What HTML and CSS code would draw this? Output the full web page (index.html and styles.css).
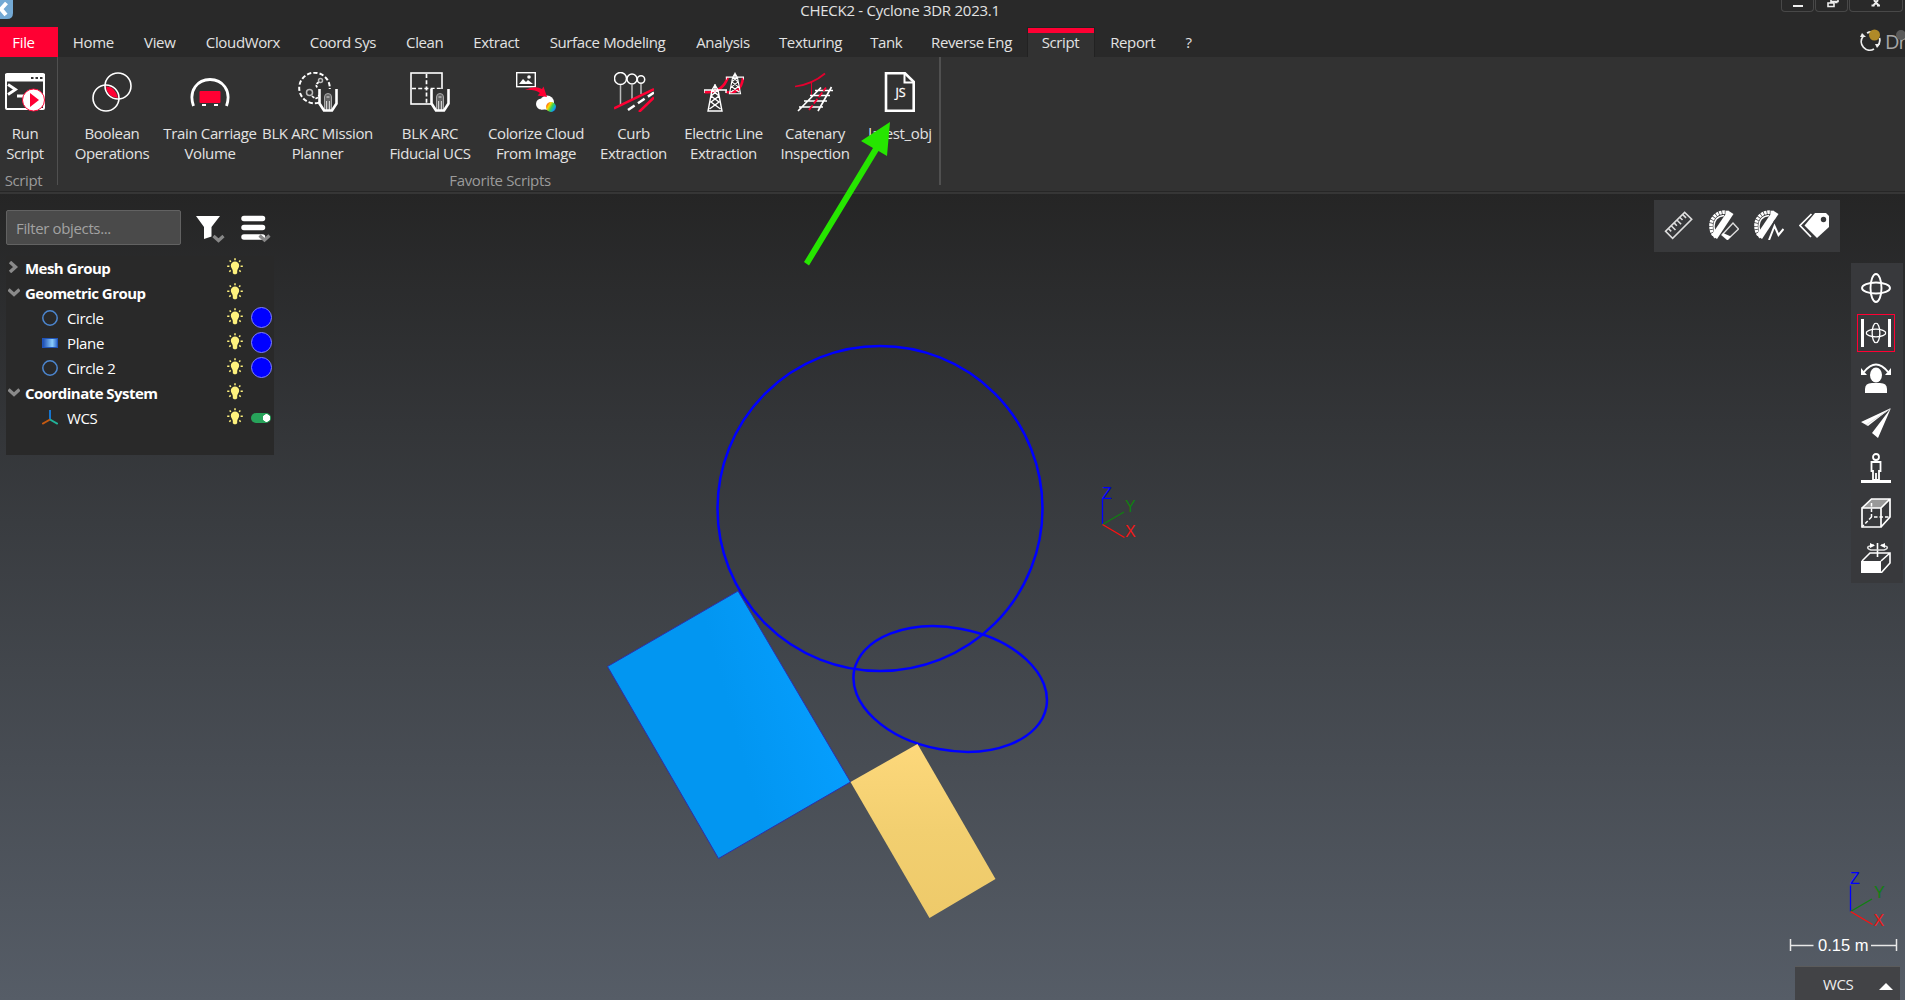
FILE: index.html
```html
<!DOCTYPE html>
<html lang="en">
<head>
<meta charset="utf-8">
<title>CHECK2 - Cyclone 3DR 2023.1</title>
<link rel="stylesheet" href="styles.css">
</head>
<body>
<svg class="defs" aria-hidden="true">
  <defs>
    <linearGradient id="blueFace" x1="0" y1="0.6" x2="1" y2="0.3"><stop offset="0.5" stop-color="#0296f1"/><stop offset="0.9" stop-color="#069efe"/></linearGradient>
    <linearGradient id="goldFace" x1="0" y1="0" x2="0" y2="1"><stop offset="0" stop-color="#fdd87b"/><stop offset="0.5" stop-color="#f2cf70"/><stop offset="1" stop-color="#eeca6a"/></linearGradient>
    <linearGradient id="planeFill"><stop offset="0" stop-color="#1646b0"/><stop offset="0.65" stop-color="#8bcdfb"/><stop offset="1" stop-color="#2a62c8"/></linearGradient>
    <linearGradient id="rainbow" x1="0" y1="0.2" x2="1" y2="0.8"><stop offset="0" stop-color="#ff3b1f"/><stop offset="0.3" stop-color="#ffd900"/><stop offset="0.55" stop-color="#39d353"/><stop offset="0.8" stop-color="#10a5e8"/><stop offset="1" stop-color="#2840d0"/></linearGradient>
    <symbol id="bulb" viewBox="0 0 16 18">
      <path d="M8 3.500a4.200 4.200 0 0 1 4.200 4.200c0 2-1.700 2.800-2 5.300v2.300L9 16.300H7l-1.200-1V13c-.3-2.500-2-3.300-2-5.300A4.200 4.200 0 0 1 8 3.500z" fill="#fff27d"/>
      <path d="M8 .3v2M2.600 2.500l1.300 1.300M13.400 2.500l-1.300 1.300M.2 8.200h2.200M13.600 8.200h2.200M2.300 13.700l1.400-1.300M13.700 13.700l-1.400-1.300" stroke="#fff27d" stroke-width="1.500"/>
    </symbol>
    <symbol id="ring" viewBox="0 0 16 16"><circle cx="8" cy="8" r="7.200" fill="none" stroke="#4c86cf" stroke-width="1.500"/></symbol>
    <symbol id="scanner" viewBox="0 0 20 24">
      <path d="M1 1v14l4.500 7.500h9L19 15V1" fill="#323232"/>
      <path d="M6.500 22V9q0-3.500 3.500-3.500T13.500 9v13" fill="#666" stroke="#aaa"/><path d="M8.600 13v9M11.400 13v9M8.500 9h3" stroke="#ddd"/>
      <path d="M1.500 1v14.500L6 22.500h8l4.500-7V1" fill="none" stroke="#fff" stroke-width="2.600"/>
    </symbol>
    <symbol id="pylon" viewBox="0 0 24 28">
      <path d="M0 6h24M1 6v3M23 6v3M12 0v6M9 6l3-5 3 5M9 6 5 27h14L15 6M8 12l8 6-9.500 7M16 12l-8 6 9.500 7M9 6l7 6M15 6l-7 6" fill="none" stroke="#fff" stroke-width="1.400"/>
    </symbol>
    <symbol id="orbit" viewBox="0 0 30 30"><g fill="none" stroke="#fff" stroke-width="1.900"><ellipse cx="15" cy="15" rx="14" ry="5.500"/><ellipse cx="15" cy="15" rx="5.500" ry="14"/></g></symbol>
    <symbol id="protractor" viewBox="0 0 30 30">
      <path d="M19 2.500C9 .5 2 7.500 2 15.500c0 6 2 9 5 11.500" fill="none" stroke="#fff" stroke-width="3.600" stroke-dasharray="2.500 .7"/>
      <path d="M15 5.500C8 6 5 11 5 16c0 3 1 6 3 8" fill="none" stroke="#fff" stroke-width="1.400"/>
      <path d="M19 .5l5.500 3.500L8 29l-5.500-4z" fill="#fff"/>
    </symbol>
  </defs>
</svg>

<div class="app">
  <header class="titlebar">
    <svg class="app-logo" width="13" height="19" viewBox="0 0 13 19"><path d="M0 0h13v13q0 6-6 6H0z" fill="#73a9d4"/><path d="M6.500 3 1 9l5 6" fill="none" stroke="#fff" stroke-width="4"/></svg>
    <div class="title">CHECK2 - Cyclone 3DR 2023.1</div>
    <div class="window-controls">
      <span><svg width="33" height="12"><path d="M11 6h10" stroke="#eee" stroke-width="2"/></svg></span>
      <span><svg width="33" height="12"><path d="M15 0v1.500h7V0M12 3h6v3.500h-6zM19 2.500h2.500" fill="none" stroke="#eee" stroke-width="1.600"/></svg></span>
      <span class="close"><svg width="54" height="12"><path d="M23 6l5-6M29 6l-5-6M21.500 5.500h3M27 5.500h3" stroke="#eee" stroke-width="2"/></svg></span>
    </div>
  </header>

  <nav class="tabs">
    <a class="file">File</a><a>Home</a><a>View</a><a>CloudWorx</a><a>Coord Sys</a><a>Clean</a><a>Extract</a><a>Surface Modeling</a><a>Analysis</a><a>Texturing</a><a>Tank</a><a>Reverse Eng</a><a class="active">Script</a><a>Report</a><a>?</a>
    <div class="account">
      <svg width="24" height="24" viewBox="0 0 24 24"><path d="M3 7.500A8.500 8.500 0 0 0 14 20M19.500 9a8.500 8.500 0 0 1-2.500 8.500M7 4q2-1 4-1" fill="none" stroke="#eee" stroke-width="1.800"/><path d="M0 8l2-4 4 4zM15 15h5l-3 4z" fill="#eee"/><circle cx="14.500" cy="6" r="5.500" fill="#b08a28"/></svg>
      <span>Dr</span>
      <i class="presence"></i>
    </div>
  </nav>

  <section class="ribbon">
    <div class="group run">
      <div class="tools">
        <div class="tool">
          <svg viewBox="0 0 40 40"><rect x="1" y="2" width="38" height="35" rx="1" fill="none" stroke="#fff" stroke-width="2"/><path d="M0 2h40v7.500H0z" fill="#fff"/><path d="M26 6h2.500M30.500 6H33M35 6h2.500" stroke="#323232" stroke-width="2"/><path d="M3 12.500l7.500 5L3 22.500M12 24h8" fill="none" stroke="#fff" stroke-width="2.800"/><circle cx="28.500" cy="28" r="11" fill="#fff" stroke="#ff0033"/><path d="M25 21l9 7-9 7z" fill="#ff0033"/></svg>
          <span>Run<br>Script</span>
        </div>
      </div>
      <div class="caption">Script</div>
    </div>
    <div class="group favorites">
      <div class="tools">
        <div class="tool">
          <svg viewBox="0 0 40 40"><g fill="none" stroke="#fff" stroke-width="1.600"><circle cx="14" cy="26" r="13"/><circle cx="26" cy="14" r="13"/></g><path d="M14 14.500q9-.5 12 11.500Q15 25 14 14.500z" fill="#ff0033"/></svg>
          <span>Boolean<br>Operations</span>
        </div>
        <div class="tool">
          <svg viewBox="0 0 40 40"><path d="M3.500 34C-2 18 8 7.500 20 7.500S42 18 36.500 34" fill="none" stroke="#fff" stroke-width="2.800"/><rect x="9.500" y="19" width="21" height="12" rx="1" fill="#ff0033"/><path d="M12 33h4M24 33h4" stroke="#fff" stroke-width="2"/></svg>
          <span>Train Carriage<br>Volume</span>
        </div>
        <div class="tool">
          <svg viewBox="0 0 40 40"><circle cx="16.500" cy="16" r="15.300" fill="none" stroke="#fff" stroke-width="2" stroke-dasharray="4.300 2.100"/><path d="M21 10q-5 3-1 6M14 24q5 5 7-1" fill="none" stroke="#fff" stroke-width="1.700" stroke-dasharray="3 1"/><g fill="none" stroke="#bbb" stroke-width="1.500"><circle cx="22.500" cy="8.500" r="2"/><circle cx="11.500" cy="20.500" r="3"/></g><use href="#scanner" x="20" y="16" width="20" height="24"/></svg>
          <span>BLK ARC Mission<br>Planner</span>
        </div>
        <div class="tool">
          <svg viewBox="0 0 40 40"><rect x="1" y="1" width="31" height="31" fill="none" stroke="#fff" stroke-width="1.600"/><path d="M2 16.500h30M16.500 2v30" stroke="#fff" stroke-width="1.700" stroke-dasharray="4 2.200"/><use href="#scanner" x="20" y="16" width="20" height="24"/></svg>
          <span>BLK ARC<br>Fiducial UCS</span>
        </div>
        <div class="tool">
          <svg viewBox="0 0 40 40"><rect x=".7" y=".7" width="18.600" height="14" fill="none" stroke="#fff" stroke-width="1.400"/><path d="M3 12l4-5 3 3 2-2 5 4z" fill="#fff"/><circle cx="13" cy="5" r="1.800" fill="#fff"/><circle cx="25.500" cy="32" r="5.500" fill="#fff"/><circle cx="31" cy="30.500" r="7" fill="#fff"/><path d="M24 33h10v4.500H25z" fill="#fff"/><path d="M9 18q10-5 17-1l1.500-2.500L31 25l-9.500-1.500L24 21q-6-4-15-3z" fill="#ff0033"/><circle cx="35" cy="35" r="5" fill="url(#rainbow)"/></svg>
          <span>Colorize Cloud<br>From Image</span>
        </div>
        <div class="tool">
          <svg viewBox="0 0 40 40"><g fill="none" stroke="#fff" stroke-width="1.500"><circle cx="6.500" cy="6.500" r="6"/><circle cx="18" cy="7" r="5"/><circle cx="27" cy="7.500" r="3.700"/><path d="M6.500 13v20M18 12v15M27 12v10" stroke="#bbb"/></g><path d="M0 36.500 40 17M25 40l15-14.500" stroke="#ff0033" stroke-width="2.500"/><path d="M14 38 40 20.500" stroke="#fff" stroke-width="2.500" stroke-dasharray="8 4"/></svg>
          <span>Curb<br>Extraction</span>
        </div>
        <div class="tool">
          <svg viewBox="0 0 40 40"><path d="M0 20q18 2 24-15M22 20q15 3 17-14" fill="none" stroke="#ff0033" stroke-width="2.500"/><use href="#pylon" x="21.500" y="0" width="19" height="23"/><use href="#pylon" x="-1" y="12" width="24" height="28"/></svg>
          <span>Electric Line<br>Extraction</span>
        </div>
        <div class="tool">
          <svg viewBox="0 0 40 40"><path d="M0 14.500q17-2 30-13" fill="none" stroke="#e4002e" stroke-width="1.700"/><path d="M16.500 10v16" stroke="#e4002e" stroke-width="1"/><path d="M3 39 26 15.500M23 39 36.500 15M20 18.500h18M15 23.500h20M9 29h23M4 35h24" stroke="#fff" stroke-width="1.700"/><path d="M14 38 31 15.500" stroke="#ff0033" stroke-width="1.800" stroke-dasharray="6 2"/></svg>
          <span>Catenary<br>Inspection</span>
        </div>
        <div class="tool">
          <svg viewBox="0 0 40 40"><path d="M6 1.300h19l8.700 8.500v29H6z" fill="none" stroke="#fff" stroke-width="2.600"/><path d="M24.500 1v9.500H34" fill="none" stroke="#fff" stroke-width="2"/><text class="js" x="20.500" y="24.500">JS</text></svg>
          <span>latest_obj</span>
        </div>
      </div>
      <div class="caption">Favorite Scripts</div>
    </div>
  </section>

  <main class="viewport">
    <aside class="explorer">
      <div class="filter-row">
        <div class="filter">Filter objects...</div>
        <svg class="funnel" width="30" height="30" viewBox="0 0 30 30"><path d="M0 2h24l-8.500 11v9.500L8 25V13z" fill="#fff"/><path d="M17.500 22l5 4.500 5-4.500" fill="none" stroke="#888" stroke-width="3.200"/></svg>
        <svg width="30" height="30" viewBox="0 0 30 30"><path d="M3 4.500h18.500M3 13.500h18.500M3 23h18.500" stroke="#fff" stroke-width="5.500" stroke-linecap="round"/><path d="M18.500 21.500l5 4.500 5-4.500" fill="none" stroke="#888" stroke-width="3.200"/></svg>
      </div>
      <div class="tree">
        <div class="row group-row"><svg class="chev" viewBox="0 0 12 12"><path d="M2 1l5.500 5L2 11" /></svg><b>Mesh Group</b><svg class="bulb"><use href="#bulb"/></svg></div>
        <div class="row group-row"><svg class="chev" viewBox="0 0 12 12"><path d="M.5 3.500 6 8.500l5.500-5"/></svg><b>Geometric Group</b><svg class="bulb"><use href="#bulb"/></svg></div>
        <div class="row"><svg class="kind"><use href="#ring"/></svg><span>Circle</span><svg class="bulb"><use href="#bulb"/></svg><i class="swatch"></i></div>
        <div class="row"><svg class="kind" viewBox="0 0 16 16"><rect x=".5" y="3.500" width="15" height="9" fill="url(#planeFill)" stroke="#2154b8"/></svg><span>Plane</span><svg class="bulb"><use href="#bulb"/></svg><i class="swatch"></i></div>
        <div class="row"><svg class="kind"><use href="#ring"/></svg><span>Circle 2</span><svg class="bulb"><use href="#bulb"/></svg><i class="swatch"></i></div>
        <div class="row group-row"><svg class="chev" viewBox="0 0 12 12"><path d="M.5 3.500 6 8.500l5.500-5"/></svg><b>Coordinate System</b><svg class="bulb"><use href="#bulb"/></svg></div>
        <div class="row"><svg class="kind" viewBox="0 0 16 16"><g stroke-width="1.900"><path d="M8 0v9.500" stroke="#1679d8"/><path d="M8 9.500.3 14" stroke="#c65a11"/><path d="M8 9.500l7.700 4.500" stroke="#22b39a"/></g></svg><span>WCS</span><svg class="bulb"><use href="#bulb"/></svg><i class="toggle"></i></div>
      </div>
    </aside>

    <svg class="scene" viewBox="0 195 1905 805">
      <polygon points="738,591 607.500,666.500 718.500,858.500 850.500,782" fill="url(#blueFace)" stroke="#2a2fae"/>
      <g fill="none" stroke="#0000ff" stroke-width="2.500"><circle cx="880" cy="508.500" r="162.500"/><ellipse cx="950.200" cy="689" rx="97.800" ry="61.100" transform="rotate(10.700 950.200 689)"/></g>
      <polygon points="917.500,744 995.500,879 929.500,918 850.500,782" fill="url(#goldFace)"/>
      <g class="axes" transform="translate(1102.500 524.500)"><path d="M0 0V-26" stroke="#0000ff"/><path d="M0 0l21.500-12.500" stroke="#108010"/><path d="M0 0l22 13" stroke="#ff1010"/><text x="-.5" y="-25.500" fill="#0000ff">Z</text><text x="22.500" y="-13" fill="#108010">Y</text><text x="22.500" y="12.500" fill="#f01818">X</text></g>
      <g class="axes" transform="translate(1850.500 911.500)"><path d="M0 0V-26" stroke="#0000ff"/><path d="M0 0l21.500-12.500" stroke="#108010"/><path d="M0 0l22 13" stroke="#ff1010"/><text x="-.5" y="-27.500" fill="#0000ff">Z</text><text x="23.500" y="-14" fill="#108010">Y</text><text x="23" y="14" fill="#f01818">X</text></g>
      <path d="M1790.500 939v12M1790 945.500h23.500M1871 945.500h25M1896.500 939v12" stroke="#e8e8e8" stroke-width="1.500"/>
      <text class="scale" x="1818" y="950.500">0.15 m</text>
    </svg>

    <div class="measure-bar">
      <svg viewBox="0 0 30 30"><g fill="none" stroke="#ddd" stroke-width="1.600" transform="rotate(-45 15 15)"><rect x="1" y="10" width="27" height="10"/><path d="M5 10v4M9 10v6M13 10v4M17 10v6M21 10v4M25 10v5"/></g></svg>
      <svg viewBox="0 0 30 30"><use href="#protractor"/><path d="M13 25l11-12 5.500 6-11 10.500z" fill="#38393b" stroke="#ddd" stroke-width="1.400"/><path d="M14 23l8 3.500-3.500 3.500-5.500-5z" fill="#fff"/></svg>
      <svg viewBox="0 0 30 30"><use href="#protractor"/><path d="M15 30l5.500-14 4 9 5-6" fill="none" stroke="#38393b" stroke-width="5"/><path d="M15 30l5.500-14 4 9 5-6" fill="none" stroke="#fff" stroke-width="2"/></svg>
      <svg viewBox="0 0 30 30"><path d="M16 3h11l3 3v11L18 28 5.500 15.500z" fill="#fff"/><circle cx="24.500" cy="9.500" r="2.700" fill="#38393b"/><path d="M12.500 4 1 15.500 12 27" fill="none" stroke="#fff" stroke-width="1.700"/></svg>
    </div>

    <div class="nav-bar">
      <svg viewBox="0 0 30 30"><use href="#orbit"/></svg>
      <div class="selected"><svg viewBox="0 0 30 30"><path d="M1.500 1v28M28.500 1v28" stroke="#fff" stroke-width="3"/><use href="#orbit" x="4.500" y="4.500" width="21" height="21"/></svg></div>
      <svg viewBox="0 0 30 30"><path d="M3 9Q15-6 27 9" fill="none" stroke="#fff" stroke-width="2"/><path d="M0 5v7h6zM30 5v7h-6z" fill="#fff"/><ellipse cx="15" cy="12" rx="6" ry="7.500" fill="#fff"/><path d="M4 30v-4q0-6 7-6h8q7 0 7 6v4z" fill="#fff"/></svg>
      <svg viewBox="0 0 30 30"><path d="M30 0 0 14l7 4zM30 0 11 25l6 5z" fill="#fff"/><path d="M29 1 5 17" stroke="#ddd"/></svg>
      <svg viewBox="0 0 30 30"><path d="M0 28.500h30" stroke="#fff" stroke-width="3"/><g fill="none" stroke="#fff" stroke-width="1.800"><circle cx="15" cy="4" r="3"/><path d="M10.500 9h9v9H18v9h-6v-9h-1.500zM15 20v7"/></g></svg>
      <svg viewBox="0 0 30 30"><path d="M10.500 1H29L20 10H1z" fill="#999"/><path d="M1 10h19v19H1zM1 10l9.500-9H29v18L20 29M20 10l9-9" fill="none" stroke="#fff" stroke-width="1.700"/><path d="M10.500 5v14H29M10.500 19 1 29" fill="none" stroke="#fff" stroke-width="1.500" stroke-dasharray="3.500 2"/></svg>
      <svg viewBox="0 0 30 30"><path d="M0 18h20v12H0z" fill="#fff"/><path d="M1 18 9 10h20v10L20 30M20 18l9-8M16.500 0v14" fill="none" stroke="#fff" stroke-width="1.600"/><path d="M13 2Q2 4 10 7h13q8-3-3-5" fill="none" stroke="#ddd" stroke-width="1.500"/><path d="M9 0v5l5-2.500zM24 0v5l-5-2.500z" fill="#fff"/></svg>
    </div>

    <div class="wcs">WCS<svg width="14" height="7"><path d="M0 7 7 0l7 7z" fill="#fff"/></svg></div>
  </main>

  <svg class="pointer" width="90" height="145" viewBox="802 121 90 145"><path d="M890 122l-3 34-8.500-5L809 265.500l-5-3.500 69-114-12-7z" fill="#26e600"/></svg>
</div>
</body>
</html>
```
FILE: styles.css
```css
* { box-sizing: border-box; }
body {
  margin: 0;
  background: #292929;
  color: #e2e2e2;
  font-family: "Open Sans", "Noto Sans", sans-serif;
  font-size: 15px;
  letter-spacing: -0.36px;
}
svg { display: block; flex: none; }
.defs { position: absolute; width: 0; height: 0; }
.app { position: relative; width: 1905px; height: 1000px; display: flex; flex-direction: column; overflow: hidden; }

.titlebar { height: 27px; display: grid; grid-template-columns: 780px 240px 1fr; }
.title { width: 240px; line-height: 21px; text-align: center; white-space: nowrap; letter-spacing: -0.26px; }
.window-controls { display: flex; justify-content: flex-end; gap: 1px; padding-right: 2px; }
.window-controls span { width: 33px; height: 12px; border: solid #484848; border-width: 0 1px 1px; border-radius: 0 0 4px 4px; overflow: hidden; }
.window-controls .close { width: 54px; }

.tabs { height: 30px; display: grid; grid-template-columns: 58px 70.500px 62.500px 104px 96px 67.500px 75.500px 147px 84px 91px 60.500px 110px 68px 76.500px 35px 1fr; }
.tabs a { text-align: center; line-height: 31px; white-space: nowrap; }
.tabs .file { background: #ff0033; color: #fff; padding-right: 11px; }
.tabs .active { background: #323232; border: 1px solid #222; border-width: 1px 1px 0; box-shadow: inset 0 5px #ff0033; line-height: 29px; }
.account { position: relative; display: flex; justify-content: flex-end; overflow: hidden; }
.account svg { margin: 2px 1px 0 0; }
.account span { width: 20px; font-size: 20px; color: #a5a5a5; line-height: 30px; letter-spacing: -1px; }
.presence { position: absolute; right: -1px; top: 3px; width: 10px; height: 10px; border-radius: 50%; background: #5a5a5a; }

.ribbon { height: 134px; background: #323232; display: flex; }
.group { height: 128px; border-right: 1px solid #505050; display: flex; flex-direction: column; }
.run { width: 58px; padding-right: 7px; }
.favorites { width: 883px; border-right-width: 2px; padding-left: 10px; }
.tools { height: 106px; padding-top: 15px; display: grid; }
.favorites .tools { grid-template-columns: 88px 108px 107px 118px 94px 101px 79px 104px 66px; }
.tool { display: flex; flex-direction: column; align-items: center; gap: 11px; line-height: 20px; text-align: center; white-space: nowrap; }
.tool svg { width: 40px; height: 40px; }
.js { font: 400 12.5px "Open Sans", sans-serif; fill: #fff; stroke: #fff; stroke-width: 0.300; text-anchor: middle; letter-spacing: 0; }
.caption { height: 22px; line-height: 35px; color: #9b9b9b; text-align: center; }
.run .caption { padding-right: 3px; }
.favorites .caption { padding-right: 7px; }

.viewport { flex: 1; position: relative; border-top: 1px solid #262626; background: linear-gradient(#363636 0 2px, transparent 2px), linear-gradient(#252525, #565d67); }
.scene { position: absolute; left: 0; top: 3px; width: 1905px; height: 805px; }
.axes { font: 16px "Liberation Sans", sans-serif; stroke-width: 1.300; letter-spacing: 0; }
.axes text { stroke: none; }
.scale { font: 16.500px "Liberation Sans", sans-serif; fill: #fff; letter-spacing: 0; }

.explorer { position: absolute; z-index: 1; left: 6px; top: 18px; width: 268px; }
.filter-row { display: flex; height: 46px; align-items: flex-start; }
.filter { width: 175px; height: 35px; border: 1px solid #626262; border-radius: 2px; background: #4a4a4a; color: #a2a2a2; padding-left: 9px; line-height: 35px; }
.funnel { margin: 4px 15px 0 15px; }
.filter-row svg:last-child { margin-top: 4px; }
.tree { height: 199px; background: #292929; color: #fff; }
.row { height: 25px; display: grid; grid-template-columns: 36px 25px 160px 23px 24px; align-items: center; line-height: 25px; }
.group-row { grid-template-columns: 19px 202px 23px; }
.row b { letter-spacing: -0.53px; }
.row > svg { margin-top: -3px; }
.row > .kind { margin-top: -1px; }
.chev { width: 12px; height: 12px; margin-left: 2px; fill: none; stroke: #8a8a8a; stroke-width: 3.400; }
.kind { width: 16px; height: 16px; grid-column: 2; }
.bulb { width: 16px; height: 18px; }
.swatch { width: 21px; height: 21px; margin: -2px 0 0 1px; border-radius: 50%; background: #0000ff; border: 1px solid #8080ff; }
.toggle { width: 20px; height: 10px; margin: -1px 0 0 1px; border-radius: 5px; background: radial-gradient(circle at 15.500px 5px, #fff 3.500px, #27a35a 4px); }

.measure-bar { position: absolute; left: 1654px; top: 8px; width: 186px; height: 52px; background: #38393b; display: flex; gap: 15px; align-items: center; padding: 0 10px 2px; }
.measure-bar svg { width: 30px; height: 30px; }
.nav-bar { position: absolute; left: 1851px; top: 71px; width: 52px; height: 320px; background: #38393c; display: flex; flex-direction: column; align-items: center; gap: 15px; padding: 10px 2px 0 0; }
.nav-bar svg { width: 30px; height: 30px; }
.selected { border: 1px solid #ff0033; padding: 3px; width: 38px; height: 38px; margin: -4px 0; }
.wcs { position: absolute; left: 1795px; bottom: 0; width: 105px; height: 34px; background: #424346; border-top: 1px solid #5b5b5b; color: #eee; display: flex; align-items: center; justify-content: space-between; padding: 0 7px 0 28px; }
.wcs svg { margin-top: 5px; }
.pointer { position: absolute; z-index: 2; left: 802px; top: 121px; }
```
